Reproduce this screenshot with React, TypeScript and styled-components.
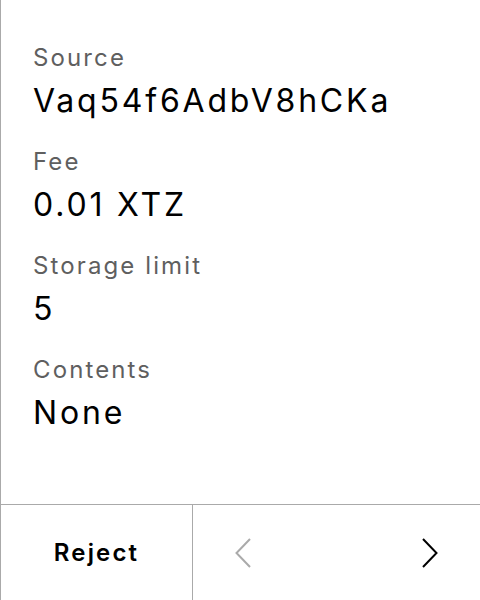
import React from "react";
import styled, { createGlobalStyle } from "styled-components";

const Global = createGlobalStyle`
  html, body { margin: 0; padding: 0; background: #fff; }
  body { font-family: Inter, "Noto Sans", sans-serif; }
`;

const Screen = styled.div`
  width: 480px;
  height: 600px;
  box-sizing: border-box;
  border-left: 1px solid #aaaaaa;
  display: flex;
  flex-direction: column;
  background: #fff;
`;

const Content = styled.div`
  flex: 1;
  padding: 42px 32px 0 32px;
  display: flex;
  flex-direction: column;
  gap: 25px;
`;

const Field = styled.div`
  display: flex;
  flex-direction: column;
`;

const Label = styled.div`
  font-size: 24px;
  line-height: 32px;
  letter-spacing: 0.088em;
  color: #5f5f5f;
`;

const Value = styled.div`
  margin-top: 7px;
  font-size: 32px;
  line-height: 40px;
  letter-spacing: 0.088em;
  color: #000;
`;

const Footer = styled.div`
  height: 96px;
  box-sizing: border-box;
  border-top: 1px solid #aaaaaa;
  display: grid;
  grid-template-columns: 192px 1fr;
`;

const RejectButton = styled.button`
  box-sizing: border-box;
  border: none;
  border-right: 1px solid #aaaaaa;
  background: transparent;
  font-family: Inter, "Noto Sans", sans-serif;
  font-size: 24px;
  font-weight: 600;
  letter-spacing: 0.09em;
  color: #000;
  padding: 0;
  cursor: pointer;
`;

const Nav = styled.div`
  display: flex;
  align-items: center;
  justify-content: space-between;
  padding: 0 42px;
`;

const NavButton = styled.button<{ $disabled?: boolean }>`
  border: none;
  background: transparent;
  padding: 0;
  display: flex;
  color: ${(p) => (p.$disabled ? "#aaaaaa" : "#000")};
`;

const Chevron = ({ dir }: { dir: "left" | "right" }) => (
  <svg width="16" height="30" viewBox="0 0 16 30" fill="none">
    <path
      d={dir === "left" ? "M15 1 L1.5 15 L15 29" : "M1 1 L14.5 15 L1 29"}
      stroke="currentColor"
      strokeWidth="2"
    />
  </svg>
);

const fields = [
  { label: "Source", value: "Vaq54f6AdbV8hCKa" },
  { label: "Fee", value: "0.01 XTZ" },
  { label: "Storage limit", value: "5" },
  { label: "Contents", value: "None" },
];

export default function App() {
  return (
    <>
      <Global />
      <Screen>
        <Content>
          {fields.map((f) => (
            <Field key={f.label}>
              <Label>{f.label}</Label>
              <Value>{f.value}</Value>
            </Field>
          ))}
        </Content>
        <Footer>
          <RejectButton>Reject</RejectButton>
          <Nav>
            <NavButton $disabled>
              <Chevron dir="left" />
            </NavButton>
            <NavButton>
              <Chevron dir="right" />
            </NavButton>
          </Nav>
        </Footer>
      </Screen>
    </>
  );
}
